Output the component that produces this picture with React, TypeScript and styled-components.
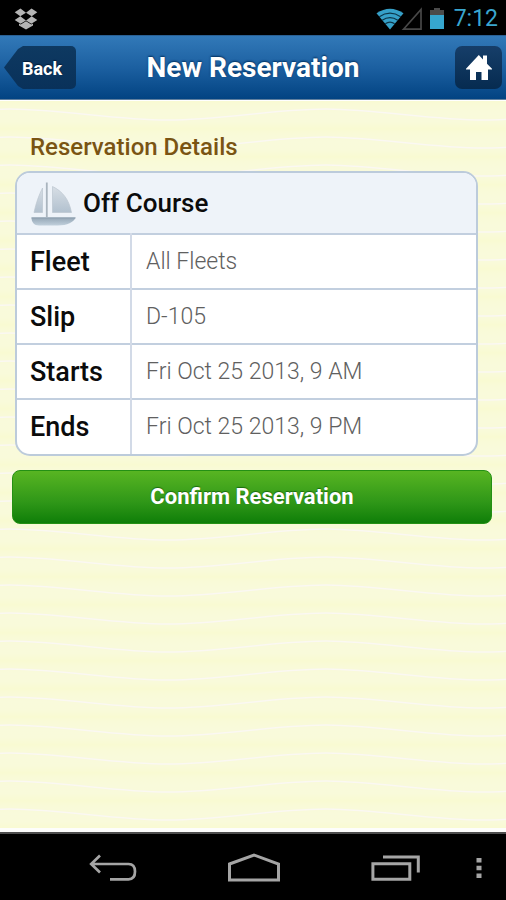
import React from "react";
import styled, { createGlobalStyle } from "styled-components";

const waves = encodeURIComponent(
  `<svg xmlns="http://www.w3.org/2000/svg" width="316" height="28" viewBox="0 0 316 28">
    <defs><linearGradient id="g" x1="0" y1="0" x2="0" y2="1">
      <stop offset="0" stop-color="#f9fad7"/><stop offset="0.3" stop-color="#f9fadb"/>
      <stop offset="0.6" stop-color="#f9fada"/><stop offset="0.85" stop-color="#f9fad2"/><stop offset="1" stop-color="#f9fad7"/>
    </linearGradient></defs>
    <rect width="316" height="28" fill="url(#g)"/>
    <path d="M-4 4C50 4 104 15 158 15S262 4 320 4" fill="none" stroke="#fbf8f2" stroke-width="1.5"/>
  </svg>`
);

const GlobalStyle = createGlobalStyle`
  *, *::before, *::after { box-sizing: border-box; }
  body { margin: 0; background: #000; font-family: Roboto, "Liberation Sans", sans-serif; }
  h1, h2 { margin: 0; }
`;

const Screen = styled.div`
  display: flex;
  flex-direction: column;
  min-height: 100vh;
`;

const StatusBar = styled.div`
  display: flex;
  align-items: center;
  height: 35px;
  padding: 2px 8px 0 14px;
  background: #000;
  color: #3aa6cf;
`;

const StatusIcons = styled.div`
  display: flex;
  align-items: center;
  margin-left: auto;
`;

const Clock = styled.time`
  margin-left: 4px;
  font-size: 23px;
  line-height: 32px;
`;

const Header = styled.header`
  display: grid;
  grid-template-columns: 72px 1fr 72px;
  align-items: center;
  height: 65px;
  padding: 0 4px;
  background: linear-gradient(#3279b8, #1c60a1 50%, #024382);
  border-top: 1px solid #2a6093;
  border-bottom: 1px solid #5f7f9e;
`;

const BackButton = styled.button`
  display: flex;
  align-items: center;
  height: 43px;
  padding: 2px 0 0 18px;
  border: 0;
  border-radius: 0 5px 5px 0;
  background: linear-gradient(#0e3961, #09315a);
  clip-path: polygon(0 50%, 14px 3px, 19px 0, 100% 0, 100% 100%, 19px 100%, 14px 40px);
  color: #fff;
  font: 700 18px/24px Roboto, sans-serif;
  text-shadow: 0 -1px 1px #001c38;
`;

const Title = styled.h1`
  color: #fff;
  font-size: 28px;
  line-height: 32px;
  font-weight: 700;
  text-align: center;
  text-shadow: 0 -1px 2px #00305f;
`;

const HomeLink = styled.a`
  display: flex;
  align-items: center;
  justify-content: center;
  justify-self: end;
  width: 47px;
  height: 43px;
  border-radius: 7px;
  background: linear-gradient(#163e69, #062b50);
`;

const Content = styled.main`
  flex: 1;
  padding: 30px 14px 20px 12px;
  border-top: 1px solid #fff;
  border-bottom: 4px solid #fdfdfb;
  background: #f9fad8 url("data:image/svg+xml,${waves}") 10px 4px;
`;

const SectionTitle = styled.h2`
  padding-left: 18px;
  color: #7a5413;
  font-size: 24px;
  line-height: 32px;
  font-weight: 500;
`;

const Card = styled.div`
  margin: 8px 14px 14px 3px;
  overflow: hidden;
  border: 2px solid #bccbdb;
  border-radius: 15px;
  background: #fff;
`;

const Details = styled.table`
  width: 100%;
  border-collapse: collapse;
  table-layout: fixed;
  text-align: left;
`;

const LabelColumn = styled.col`
  width: 114px;
`;

const BoatHeading = styled.th`
  height: 61px;
  padding: 0 12px;
  background: #eef3f9;
  color: #0b0b0b;
  font-size: 26px;
  line-height: 32px;
  font-weight: 500;
`;

const BoatName = styled.div`
  display: flex;
  align-items: center;
  gap: 6px;
`;

const LabelCell = styled.th`
  height: 55px;
  padding: 0 0 0 13px;
  border-top: 2px solid #c2cfdf;
  border-right: 2px solid #d2dae7;
  color: #0b0b0b;
  font-size: 27px;
  line-height: 32px;
  font-weight: 500;
`;

const ValueCell = styled.td`
  padding: 0 14px;
  border-top: 2px solid #c2cfdf;
  color: #606060;
  font-size: 23px;
  line-height: 32px;
  font-weight: 300;
`;

const ConfirmButton = styled.button`
  display: block;
  width: 100%;
  height: 54px;
  padding: 0;
  border: 1px solid #249014;
  border-radius: 8px;
  background: linear-gradient(#58b522, #2f9718 60%, #0f7e08);
  color: #fff;
  font: 700 22px/32px Roboto, sans-serif;
  text-shadow: 0 -1px 1px #1a6b10;
`;

const NavBar = styled.nav`
  display: grid;
  grid-template-columns: 42px 1fr 1fr 1fr 40px;
  justify-items: center;
  align-items: center;
  height: 68px;
  padding-top: 2px;
  border-top: 2px solid #4d4d4d;
  background: #000;
`;

const NavButton = styled.button`
  display: flex;
  padding: 0;
  border: 0;
  background: none;
`;

const MenuButton = styled(NavButton)`
  justify-self: start;
  padding-left: 10px;
`;

const rows = [
  { label: "Fleet", value: "All Fleets" },
  { label: "Slip", value: "D-105" },
  { label: "Starts", value: "Fri Oct 25 2013, 9 AM" },
  { label: "Ends", value: "Fri Oct 25 2013, 9 PM" },
];

const DropboxIcon = () => (
  <svg width="24" height="22" viewBox="0 0 24 22" fill="#b4b4b4" aria-hidden="true">
    <path d="M6.5 0.5L12 4.7L6.3 8.3L0.7 4.3ZM17.5 0.5L12 4.7L17.7 8.3L23.3 4.3ZM6.3 8.3L12 12.4L6.6 15.7L0.7 12ZM17.7 8.3L12 12.4L17.4 15.7L23.3 12Z" />
    <path d="M12 13.2L17.3 16.4L19 15.5V17.4L12 21.5L5 17.4V15.5L6.7 16.4Z" />
  </svg>
);

const WifiIcon = () => (
  <svg width="28" height="22" viewBox="0 0 28 22" aria-hidden="true">
    <path d="M0.5 5.3Q14-4 27.5 5.3L14 21.5Z" fill="#36a0c8" />
    <g fill="none" stroke="#0c3548" strokeWidth="1.2">
      <path d="M3.3 8.8Q14 1.6 24.7 8.8M6.2 12.2Q14 7 21.8 12.2M9.3 15.8Q14 12.5 18.7 15.8" />
    </g>
  </svg>
);

const SignalIcon = () => (
  <svg width="18" height="22" viewBox="0 0 18 22" overflow="visible" aria-hidden="true">
    <path d="M-0.5 21.2L17 1.5V21.2Z" fill="none" stroke="#484848" strokeWidth="1.7" />
  </svg>
);

const BatteryIcon = () => (
  <svg width="28" height="22" viewBox="0 0 28 22" aria-hidden="true">
    <path d="M8 7V2H12V0H18V2H22V7Z" fill="#4b4b4b" />
    <path d="M8 7H22V21H8Z" fill="#36a6cf" />
  </svg>
);

const HomeIcon = () => (
  <svg width="26" height="26" viewBox="0 0 26 26" fill="#fff" aria-hidden="true">
    <path d="M0 13.7L12.8 0L17 4.5V0.5H21V8.7L26 13.7V14.5H22V25H15.5V17H10V25H4V14.5H0Z" />
  </svg>
);

const BoatIcon = () => (
  <svg width="48" height="46" viewBox="0 0 48 46" aria-hidden="true">
    <defs>
      <linearGradient id="sail" x1="0" y1="0" x2="0" y2="1">
        <stop offset="0" stopColor="#d7dee5" />
        <stop offset="1" stopColor="#b2c1cf" />
      </linearGradient>
      <linearGradient id="hull" x1="0" y1="0" x2="0" y2="1">
        <stop offset="0" stopColor="#93a5b5" />
        <stop offset="1" stopColor="#c1d0dc" />
      </linearGradient>
    </defs>
    <path d="M13.5 8V32.5H5C7 23 10 15 13.5 8Z" fill="url(#sail)" stroke="#bcc6d0" strokeWidth="0.7" />
    <path d="M23.5 6.5C33 11 40 19 42.5 32.5H23.5Z" fill="url(#sail)" stroke="#bcc6d0" strokeWidth="0.7" />
    <path d="M17.8 2.5V37" stroke="#a9b4be" strokeWidth="1.8" />
    <path d="M2.5 37.5H46.5C45 42 38 45.5 29 45.5H10C5 45.5 2.5 42 2.5 37.5Z" fill="url(#hull)" />
    <path d="M2.5 38H46.5" stroke="#8fa0af" strokeWidth="1" />
  </svg>
);

const NavBackIcon = () => (
  <svg width="48" height="28" viewBox="0 0 48 28" fill="none" stroke="#a5a5a5" strokeWidth="2.7" aria-hidden="true">
    <path d="M11 1.5L2.2 10L11 18.5M2.5 10H39.5Q46 10 46 17.5Q46 25.3 39.5 25.3H21" />
  </svg>
);

const NavHomeIcon = () => (
  <svg width="54" height="30" viewBox="0 0 54 30" fill="none" stroke="#a5a5a5" strokeWidth="3" aria-hidden="true">
    <path d="M2.5 11L27 2L51.5 11V27H2.5Z" />
  </svg>
);

const NavRecentIcon = () => (
  <svg width="50" height="28" viewBox="0 0 50 28" fill="none" stroke="#a5a5a5" strokeWidth="3" aria-hidden="true">
    <path d="M2.9 9.8H39.8V25.3H2.9ZM13 3H48.3V18.5" />
  </svg>
);

const NavMenuIcon = () => (
  <svg width="6" height="22" viewBox="0 0 6 22" fill="#a5a5a5" aria-hidden="true">
    <path d="M0.5 1H5.5V5.5H0.5ZM0.5 8.8H5.5V13.3H0.5ZM0.5 16.6H5.5V21.1H0.5Z" />
  </svg>
);

export default function App() {
  return (
    <Screen>
      <GlobalStyle />
      <StatusBar>
        <DropboxIcon />
        <StatusIcons>
          <WifiIcon />
          <SignalIcon />
          <BatteryIcon />
          <Clock>7:12</Clock>
        </StatusIcons>
      </StatusBar>
      <Header>
        <BackButton type="button">Back</BackButton>
        <Title>New Reservation</Title>
        <HomeLink href="#home" aria-label="Home">
          <HomeIcon />
        </HomeLink>
      </Header>
      <Content>
        <SectionTitle id="details-title">Reservation Details</SectionTitle>
        <Card>
          <Details aria-labelledby="details-title">
            <colgroup>
              <LabelColumn />
              <col />
            </colgroup>
            <thead>
              <tr>
                <BoatHeading colSpan={2}>
                  <BoatName>
                    <BoatIcon />
                    Off Course
                  </BoatName>
                </BoatHeading>
              </tr>
            </thead>
            <tbody>
              {rows.map((row) => (
                <tr key={row.label}>
                  <LabelCell scope="row">{row.label}</LabelCell>
                  <ValueCell>{row.value}</ValueCell>
                </tr>
              ))}
            </tbody>
          </Details>
        </Card>
        <ConfirmButton type="button">Confirm Reservation</ConfirmButton>
      </Content>
      <NavBar aria-label="System">
        <span />
        <NavButton type="button" aria-label="Back">
          <NavBackIcon />
        </NavButton>
        <NavButton type="button" aria-label="Home">
          <NavHomeIcon />
        </NavButton>
        <NavButton type="button" aria-label="Recent apps">
          <NavRecentIcon />
        </NavButton>
        <MenuButton type="button" aria-label="Menu">
          <NavMenuIcon />
        </MenuButton>
      </NavBar>
    </Screen>
  );
}
